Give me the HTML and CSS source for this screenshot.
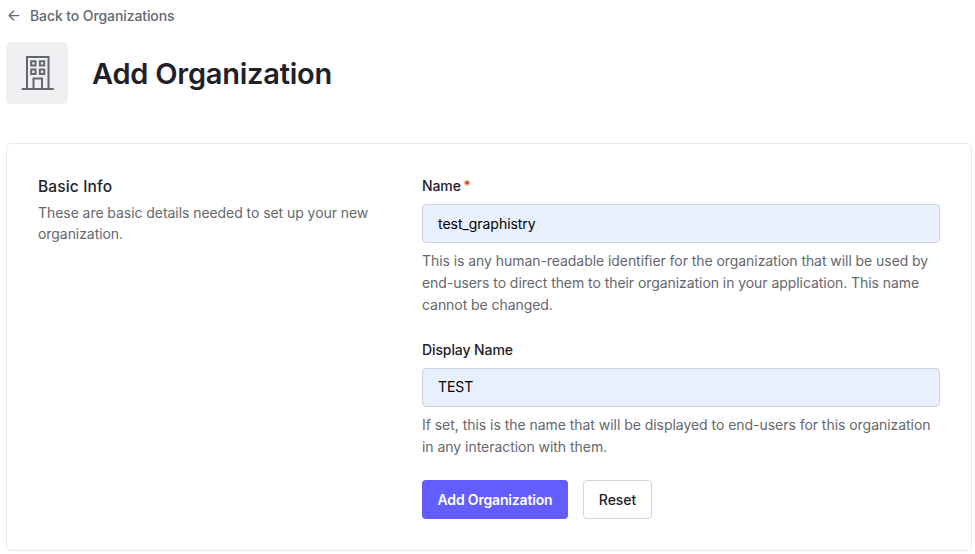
FILE: index.html
```html
<!DOCTYPE html>
<html lang="en">
<head>
<meta charset="utf-8">
<title>Add Organization</title>
<link rel="stylesheet" href="styles.css">
</head>
<body>
<a class="back"><svg width="14" height="14" viewBox="0 0 14 14" fill="none" stroke="currentColor" stroke-width="1.25" stroke-linecap="round" stroke-linejoin="round"><path d="M12.700 7.500H3.300M7.600 3 3.100 7.500 7.600 12"/></svg><span>Back to Organizations</span></a>
<header class="header">
  <div class="tile"><svg width="34" height="38" viewBox="0 0 34 38" fill="none" stroke="currentColor" stroke-width="2"><path d="M1.700 35H33.700M7 35V3H28.500V35M13.500 35V24.500H22V35M11.200 7.200h4.300v4.300h-4.300zM19.900 7.200h4.300v4.300h-4.300zM11.200 15.600h4.300v4.300h-4.300zM19.900 15.600h4.300v4.300h-4.300z"/></svg></div>
  <h1>Add Organization</h1>
</header>
<main class="card">
  <section class="info">
    <h2>Basic Info</h2>
    <p>These are basic details needed to set up your new organization.</p>
  </section>
  <form class="form">
    <div class="field">
      <label>Name <span class="req">*</span></label>
      <div class="input">test_graphistry</div>
      <p>This is any human-readable identifier for the organization that will be used by end-users to direct them to their organization in your application. This name cannot be changed.</p>
    </div>
    <div class="field second">
      <label>Display Name</label>
      <div class="input">TEST</div>
      <p>If set, this is the name that will be displayed to end-users for this organization in any interaction with them.</p>
    </div>
    <div class="actions">
      <button type="button" class="primary">Add Organization</button>
      <button type="button" class="secondary">Reset</button>
    </div>
  </form>
</main>
</body>
</html>
```
FILE: styles.css
```css
* { box-sizing: border-box; }
body { margin: 0; padding: 5px 3px 0 6px; font-family: Inter, sans-serif; font-size: 14px; color: #1e212a; background: #fff; overflow: hidden; }
h1, h2, p { margin: 0; }
.back { display: flex; align-items: center; gap: 10px; height: 20px; font-weight: 500; letter-spacing: -.1px; color: #65676e; }
.header { display: flex; align-items: center; gap: 24px; margin-top: 17.4px; height: 62px; }
.tile { display: flex; align-items: center; justify-content: center; width: 62px; height: 62px; border-radius: 5px; background: #eff0f2; color: #65676e; }
h1 { padding-top: 1px; font-size: 29px; font-weight: 600; line-height: 38px; letter-spacing: -.24px; }
.card { display: flex; margin-top: 38.2px; height: 408px; padding: 31.6px 31px; border: 1px solid #e9eaec; border-radius: 5px; }
.info { width: 384px; padding-right: 40px; }
h2 { font-size: 15.5px; font-weight: 450; line-height: 24px; letter-spacing: .15px; }
p { font-size: 14px; line-height: 21.7px; letter-spacing: -.06px; color: #65676e; }
.info p { margin-top: 2.4px; }
.form { width: 518px; }
label { display: block; height: 29px; line-height: 22px; font-weight: 480; letter-spacing: -.1px; }
.req { margin-left: -1px; color: #d03c38; }
.input { height: 39px; padding: 0 15px; line-height: 37px; border: 1px solid #cfd3dc; border-radius: 4px; background: #e8f0fe; color: #000; letter-spacing: -.04px; }
.field { height: 163.500px; }
.second label { line-height: 21px; }
.second .input { line-height: 36px; }
.field p { margin-top: 7.2px; }
.second p { letter-spacing: -.04px; }
.actions { display: flex; gap: 15px; margin-top: -22px; }
button { height: 39px; padding: 0; border-radius: 4px; font: 500 14px Inter, sans-serif; letter-spacing: -.05px; }
.primary { width: 146px; border: 0; background: #635dff; color: #fff; font-weight: 600; letter-spacing: -.17px; }
.secondary { width: 69px; border: 1px solid #d5d6d9; background: #fff; color: #1e212a; }
```
